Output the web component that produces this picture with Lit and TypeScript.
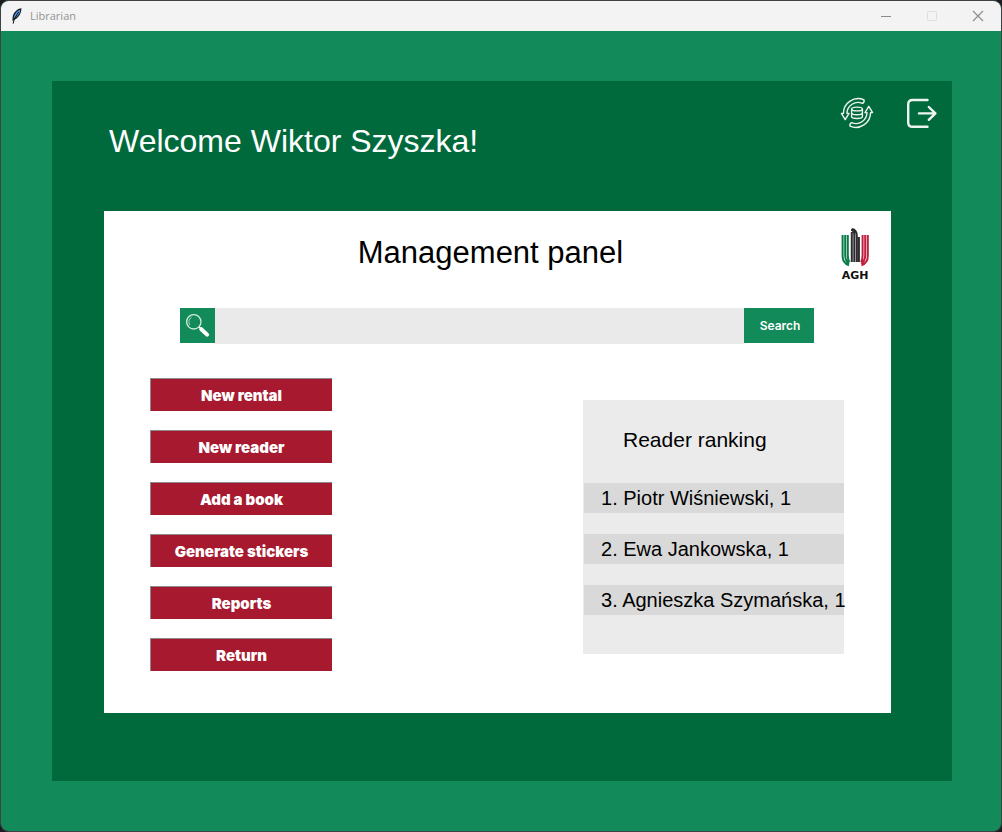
import { LitElement, html, css, svg } from "lit";
import { customElement, property, state } from "lit/decorators.js";

interface Reader {
  name: string;
  rentals: number;
}

const feather = svg`
  <path d="M12.4 1.2C8.4 1.4 4 5.6 3.6 10.5L3.4 14 5.6 12.6C9.6 11 12.6 6 12.4 1.2Z" fill="#16202c"/>
  <path d="M11.2 2.8C8.2 3.8 5 7.4 4.8 11.4 8.2 10 11.2 6.4 11.2 2.8Z" fill="#5a9be6"/>
  <path d="M9.6 5 5.2 12 4.2 16.6" fill="none" stroke="#0a0a0a" stroke-width="1"/>`;

@customElement("title-bar")
export class TitleBar extends LitElement {
  @property() heading = "";

  static styles = css`
    :host {
      display: flex;
      align-items: center;
      height: 30px;
      background: #f3f3f3;
      color: #949494;
      font: 11px/16px "Open Sans", "Noto Sans", sans-serif;
    }
    .logo {
      margin: 0 6px 0 8px;
      flex: none;
    }
    .name {
      flex: 1;
    }
    .control {
      width: 46px;
      height: 30px;
      padding: 0;
      border: 0;
      background: none;
      display: grid;
      place-items: center;
    }
  `;

  render() {
    return html`
      <svg class="logo" width="15" height="18" viewBox="0 0 15 18" aria-hidden="true">${feather}</svg>
      <span class="name">${this.heading}</span>
      <button class="control" aria-label="Minimize">
        <svg width="12" height="12"><path d="M1 6.5h10" stroke="#8a8a8a" /></svg>
      </button>
      <button class="control" aria-label="Maximize" disabled>
        <svg width="12" height="12">
          <rect x="1.5" y="1.5" width="9" height="9" rx="1" fill="none" stroke="#dedede" />
        </svg>
      </button>
      <button class="control" aria-label="Close">
        <svg width="12" height="12">
          <path d="M1 1l10 10M11 1L1 11" fill="none" stroke="#8a8a8a" stroke-width="1.1" />
        </svg>
      </button>
    `;
  }
}

@customElement("search-bar")
export class SearchBar extends LitElement {
  @state() private query = "";

  static styles = css`
    form {
      display: flex;
      align-items: flex-start;
    }
    .icon {
      width: 35px;
      height: 35px;
      background: #138a59;
    }
    .icon svg {
      display: block;
    }
    .field {
      flex: 1;
      min-width: 0;
      height: 36px;
      box-sizing: border-box;
      padding: 0 8px;
      border: 0;
      border-radius: 0;
      outline: 0;
      background: #eaeaea;
      font: 20px "Liberation Sans", Arial, sans-serif;
    }
    .submit {
      width: 70px;
      height: 35px;
      padding: 0 0 0 2px;
      border: 0;
      background: #138a59;
      color: #fff;
      font: 600 12px/16px Inter, sans-serif;
    }
  `;

  render() {
    return html`
      <form role="search" @submit=${(e: Event) => e.preventDefault()}>
        <label class="icon" for="query">
          <svg width="35" height="35" viewBox="0 0 35 35" role="img" aria-label="Search the library">
            <circle cx="13.8" cy="13.8" r="7.2" fill="none" stroke="#d3ebe0" stroke-width="1.3" />
            <path d="M9.8 17a5.4 5.4 0 0 1 1.8-7.8" fill="none" stroke="#a8d5c0" stroke-width="1" />
            <path d="M19 18.9l1.8 1.6" stroke="#fff" stroke-width="1.4" />
            <path d="M21.3 21.2l5.8 5.4" stroke="#fff" stroke-width="4" stroke-linecap="round" />
          </svg>
        </label>
        <input
          class="field"
          id="query"
          type="text"
          .value=${this.query}
          @input=${(e: Event) => (this.query = (e.target as HTMLInputElement).value)}
        />
        <button class="submit" type="submit">Search</button>
      </form>
    `;
  }
}

@customElement("reader-ranking")
export class ReaderRanking extends LitElement {
  @property({ attribute: false }) readers: Reader[] = [];

  static styles = css`
    :host {
      display: block;
      background: #ebebeb;
      color: #000;
      padding: 27px 0 39px 1px;
      font: 20px/30px "Liberation Sans", Arial, sans-serif;
    }
    .title {
      margin: 0 0 30px;
      padding-left: 39px;
      font-size: 21px;
      line-height: 26px;
      font-weight: 400;
    }
    .list {
      margin: 0;
      padding: 0;
      list-style: none;
      display: grid;
      grid-template-columns: minmax(0, 1fr);
      gap: 21px;
    }
    .row {
      padding-left: 17px;
      background: #d9d9d9;
      white-space: nowrap;
    }
  `;

  render() {
    return html`
      <h3 class="title">Reader ranking</h3>
      <ol class="list">
        ${this.readers.map((r, i) => html`<li class="row">${i + 1}. ${r.name}, ${r.rentals}</li>`)}
      </ol>
    `;
  }
}

@customElement("app-root")
export class AppRoot extends LitElement {
  private actions = ["New rental", "New reader", "Add a book", "Generate stickers", "Reports", "Return"];

  private readers: Reader[] = [
    { name: "Piotr Wiśniewski", rentals: 1 },
    { name: "Ewa Jankowska", rentals: 1 },
    { name: "Agnieszka Szymańska", rentals: 1 },
  ];

  static styles = css`
    :host {
      display: block;
      background: #1c1c22;
      font-family: "Liberation Sans", Arial, sans-serif;
    }
    .window {
      box-sizing: border-box;
      min-height: 100vh;
      display: flex;
      flex-direction: column;
      border: 1px solid #3f4145;
      border-radius: 9px;
      overflow: hidden;
      background: #138a59;
    }
    .desk {
      flex: 1;
      display: flex;
      padding: 50px 49px 50px 51px;
    }
    .shell {
      flex: 1;
      min-width: 0;
      display: flex;
      flex-direction: column;
      padding: 0 61px 68px 52px;
      background: #006a3c;
    }
    .top {
      display: flex;
      justify-content: space-between;
      align-items: flex-start;
      height: 130px;
      margin-right: -47px;
    }
    .welcome {
      margin: 42px 0 0 5px;
      color: #fff;
      font-size: 32px;
      line-height: 36px;
      font-weight: 400;
    }
    .tools {
      display: flex;
      gap: 30px;
      margin-top: 14px;
    }
    .tool {
      width: 34px;
      height: 36px;
      padding: 0;
      border: 0;
      background: none;
    }
    .tool svg {
      display: block;
    }
    .card {
      flex: 1;
      padding: 17px 20px 0 46px;
      background: #fff;
    }
    .head {
      display: flex;
      gap: 8px;
      margin-bottom: 26px;
    }
    .heading {
      flex: 1;
      margin: 7px 0 0;
      text-align: center;
      color: #000;
      font-size: 31px;
      line-height: 36px;
      font-weight: 400;
    }
    .agh {
      width: 32px;
      display: grid;
      justify-items: center;
      color: #111;
      font: 700 11px/12px "DejaVu Sans", sans-serif;
    }
    .search {
      display: block;
      margin: 0 57px 34px 30px;
    }
    .body {
      display: flex;
      justify-content: space-between;
      align-items: flex-start;
      padding-right: 27px;
    }
    .menu {
      display: grid;
      gap: 19px;
    }
    .action {
      width: 182px;
      height: 33px;
      padding: 1px 0 0;
      border: solid #8a8a8a;
      border-width: 1px 0 0 1px;
      background: #a6192e;
      color: #fff;
      font: 900 15px/20px Inter, sans-serif;
    }
    .ranking {
      width: 260px;
      margin-top: 22px;
    }
  `;

  render() {
    return html`
      <div class="window">
        <title-bar heading="Librarian"></title-bar>
        <main class="desk">
          <section class="shell">
            <header class="top">
              <h1 class="welcome">Welcome Wiktor Szyszka!</h1>
              <div class="tools">
                <button class="tool" aria-label="Refresh data">
                  <svg width="34" height="36" viewBox="0 0 34 36" fill="none" stroke="#eef5f1" stroke-width="1.4" stroke-linejoin="round">
                    <path d="M24 4.8A14.8 14.8 0 0 0 3.4 18.4L1.4 18.4 5.2 24.6 9 18.4H7A11 11 0 0 1 22.4 8.4Q24.6 7.4 24 4.8Z" />
                    <path d="M10 31.2A14.8 14.8 0 0 0 30.6 17.6L32.6 17.6 28.8 11.4 25 17.6H27A11 11 0 0 1 11.6 27.6Q9.4 28.6 10 31.2Z" />
                    <ellipse cx="17" cy="14" rx="5.4" ry="1.9" />
                    <path d="M11.6 14v7.6c0 1.1 2.4 1.9 5.4 1.9s5.4-.8 5.4-1.9V14M11.6 17.8c0 1.1 2.4 1.9 5.4 1.9s5.4-.8 5.4-1.9" />
                  </svg>
                </button>
                <button class="tool" aria-label="Log out">
                  <svg width="34" height="36" viewBox="0 0 34 36" fill="none" stroke="#eef5f1" stroke-width="2.4" stroke-linecap="round" stroke-linejoin="round">
                    <path d="M23.5 5H8.5Q4.2 5 4.2 9.3V27.5Q4.2 31.8 8.5 31.8H23.5" />
                    <path d="M15 18.4H31M24.8 12 31.4 18.4 24.8 24.8" />
                  </svg>
                </button>
              </div>
            </header>
            <section class="card">
              <header class="head">
                <h2 class="heading">Management panel</h2>
                <div class="agh">
                  <svg width="30" height="42" viewBox="0 0 30 42" fill="none" stroke-width="2" aria-hidden="true">
                    <g stroke="#0a7a48">
                      <path d="M2.6 7v21q0 7 6.4 9.4M5.2 7v20q0 6 4 8.6M7.8 7v20q0 5 1.6 7" />
                    </g>
                    <g stroke="#2b2b2f">
                      <path d="M11.8 34V4M14.3 34V7q0-4.6-3.2-5.2M16.8 34V8q0-6.2-5-7M18.9 34V9" />
                    </g>
                    <g stroke="#bf1f3f">
                      <path d="M27.8 7v21q0 7-6.4 9.4M25.2 7v20q0 6-4 8.6M22.6 7v20q0 5-1.6 7" />
                    </g>
                  </svg>
                  <span>AGH</span>
                </div>
              </header>
              <search-bar class="search"></search-bar>
              <div class="body">
                <nav class="menu" aria-label="Management">
                  ${this.actions.map((label) => html`<button class="action">${label}</button>`)}
                </nav>
                <reader-ranking class="ranking" .readers=${this.readers}></reader-ranking>
              </div>
            </section>
          </section>
        </main>
      </div>
    `;
  }
}
